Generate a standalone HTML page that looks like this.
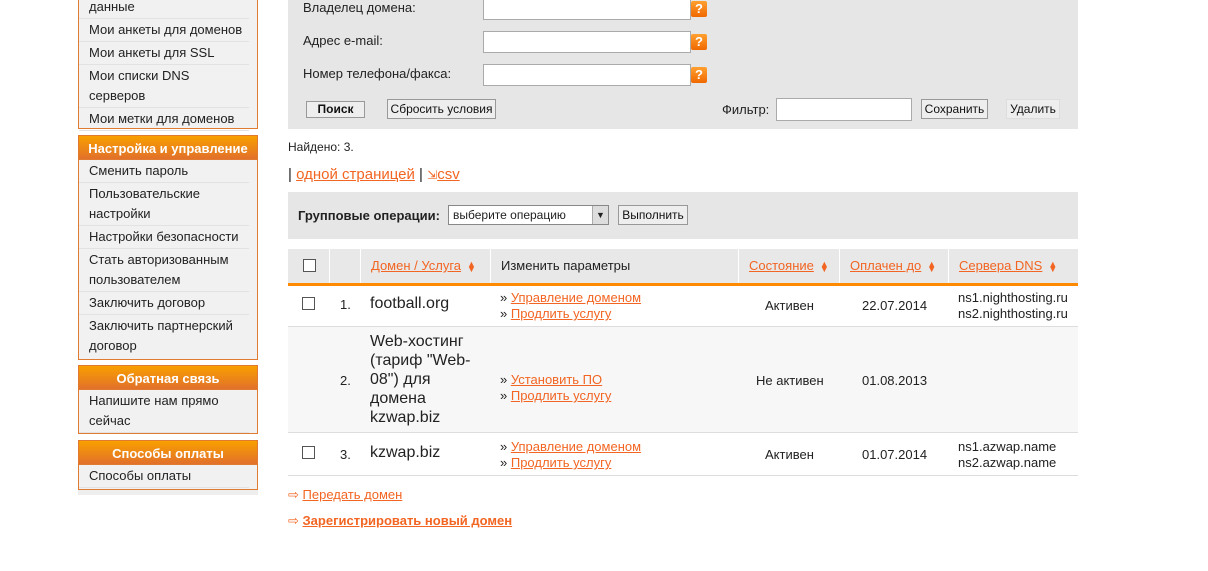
<!DOCTYPE html>
<html><head><meta charset="utf-8"><style>
*{box-sizing:border-box;margin:0;padding:0}
body{width:1208px;height:571px;background:#fff;font-family:"Liberation Sans",Arial,sans-serif;font-size:13px;color:#222;position:relative;overflow:hidden}
.a{position:absolute}
.box{position:absolute;left:78px;width:180px;border:1px solid #e07a30;border-top:none;background:#f1f1f1}
.box div.i{padding:0 0 0 10px;line-height:20px;border-bottom:1px solid #e2e2e2;margin-right:8px;padding-top:1px;padding-bottom:1px}
.hd{position:absolute;left:78px;width:180px;height:25px;background:linear-gradient(#f9a000,#e2702a);color:#fff;font-weight:bold;text-align:center;line-height:25px;font-size:13px;border:1px solid #e07a30}
.gray{position:absolute;background:#e6e6e6}
input.t{position:absolute;height:22px;border:1px solid #aaa;background:#fff}
.q{position:absolute;width:16px;height:16px;background:linear-gradient(#ffa030,#f06800);color:#fff;font-weight:bold;font-size:13px;text-align:center;line-height:16px;border-radius:2px}
.btn{position:absolute;height:20px;border:1px solid #999;background:#eee;font-size:12px;text-align:center;line-height:18px;color:#111}
a{color:#f26522;text-decoration:underline}
.cb{position:absolute;width:13px;height:13px;border:1px solid #555;background:#fff}
.sort{display:inline-block;margin-left:6px;color:#f26522;font-size:9px;line-height:5px;vertical-align:middle}
</style></head><body>
<div class="box" style="top:-4px;height:133px">
<div class="i">данные</div><div class="i">Мои анкеты для доменов</div><div class="i">Мои анкеты для SSL</div><div class="i">Мои списки DNS серверов</div><div class="i">Мои метки для доменов</div></div>
<div class="hd" style="top:135px">Настройка и управление</div>
<div class="box" style="top:160px;height:200px">
<div class="i">Сменить пароль</div><div class="i">Пользовательские настройки</div><div class="i">Настройки безопасности</div><div class="i">Стать авторизованным пользователем</div><div class="i">Заключить договор</div><div class="i" style="border:none">Заключить партнерский договор</div></div>
<div class="hd" style="top:365px">Обратная связь</div>
<div class="box" style="top:390px;height:44px"><div class="i">Напишите нам прямо сейчас</div></div>
<div class="hd" style="top:440px">Способы оплаты</div>
<div class="box" style="top:465px;height:25px"><div class="i">Способы оплаты</div></div>
<div class="a" style="left:78px;top:490px;width:180px;height:5px;background:#eee"></div>

<div class="gray" style="left:288px;top:0;width:790px;height:129px"></div>
<div class="a" style="left:303px;top:0">Владелец домена:</div>
<div class="a" style="left:303px;top:33px">Адрес e-mail:</div>
<div class="a" style="left:303px;top:66px">Номер телефона/факса:</div>
<input class="t" style="left:483px;top:-2px;width:208px">
<input class="t" style="left:483px;top:31px;width:208px">
<input class="t" style="left:483px;top:64px;width:208px">
<div class="q" style="left:691px;top:1px">?</div>
<div class="q" style="left:691px;top:34px">?</div>
<div class="q" style="left:691px;top:67px">?</div>
<div class="btn" style="left:306px;top:101px;width:59px;height:17px;line-height:15px;font-weight:bold">Поиск</div>
<div class="btn" style="left:387px;top:99px;width:109px">Сбросить условия</div>
<div class="a" style="left:722px;top:102px">Фильтр:</div>
<input class="t" style="left:776px;top:98px;width:136px;height:23px">
<div class="btn" style="left:921px;top:99px;width:67px">Сохранить</div>
<div class="btn" style="left:1006px;top:99px;width:54px;border-color:#ddd">Удалить</div>

<div class="a" style="left:288px;top:140px;font-size:12px">Найдено: 3.</div>
<div class="a" style="left:288px;top:166px;font-size:15px">| <a>одной страницей</a> | <span style="color:#f26522;font-size:12px">⇲</span><a>csv</a></div>

<div class="gray" style="left:288px;top:192px;width:790px;height:47px"></div>
<div class="a" style="left:298px;top:208px;font-weight:bold">Групповые операции:</div>
<div class="a" style="left:448px;top:205px;width:161px;height:20px;border:1px solid #888;background:#fff;font-size:12px;line-height:18px;padding-left:4px">выберите операцию<span style="position:absolute;right:0;top:0;width:16px;height:18px;background:#ddd;border-left:1px solid #aaa;text-align:center;font-size:9px">▼</span></div>
<div class="btn" style="left:618px;top:205px;width:70px">Выполнить</div>

<div class="a" style="left:288px;top:249px;width:790px;height:34px;background:#e8e8e8"></div>
<div class="a" style="left:288px;top:283px;width:790px;height:3px;background:#ff8a00"></div>
<div class="a" style="left:329px;top:249px;width:1px;height:34px;background:#fff"></div>
<div class="a" style="left:360px;top:249px;width:1px;height:34px;background:#fff"></div>
<div class="a" style="left:490px;top:249px;width:1px;height:34px;background:#fff"></div>
<div class="a" style="left:738px;top:249px;width:1px;height:34px;background:#fff"></div>
<div class="a" style="left:839px;top:249px;width:1px;height:34px;background:#fff"></div>
<div class="a" style="left:948px;top:249px;width:1px;height:34px;background:#fff"></div>
<div class="cb" style="left:303px;top:259px"></div>
<div class="a" style="left:371px;top:258px"><a>Домен / Услуга</a><span class="sort">▲<br>▼</span></div>
<div class="a" style="left:501px;top:258px">Изменить параметры</div>
<div class="a" style="left:749px;top:258px"><a>Состояние</a><span class="sort">▲<br>▼</span></div>
<div class="a" style="left:850px;top:258px"><a>Оплачен до</a><span class="sort">▲<br>▼</span></div>
<div class="a" style="left:959px;top:258px"><a>Сервера DNS</a><span class="sort">▲<br>▼</span></div>

<div class="a" style="left:288px;top:326px;width:790px;height:1px;background:#ddd"></div>
<div class="a" style="left:288px;top:327px;width:790px;height:105px;background:#f7f7f7"></div>
<div class="a" style="left:288px;top:432px;width:790px;height:1px;background:#ddd"></div>
<div class="a" style="left:288px;top:475px;width:790px;height:1px;background:#ddd"></div>

<div class="cb" style="left:302px;top:297px"></div>
<div class="a" style="left:340px;top:297px;font-size:13px">1.</div>
<div class="a" style="left:370px;top:295px;font-size:16px">football.org</div>
<div class="a" style="left:500px;top:290px;line-height:16px">» <a>Управление доменом</a><br>» <a>Продлить услугу</a></div>
<div class="a" style="left:765px;top:298px">Активен</div>
<div class="a" style="left:862px;top:298px">22.07.2014</div>
<div class="a" style="left:958px;top:290px;line-height:16px">ns1.nighthosting.ru<br>ns2.nighthosting.ru</div>

<div class="a" style="left:340px;top:373px">2.</div>
<div class="a" style="left:370px;top:332px;font-size:16px;line-height:19px;width:110px">Web-хостинг (тариф "Web-08") для домена kzwap.biz</div>
<div class="a" style="left:500px;top:372px;line-height:16px">» <a>Установить ПО</a><br>» <a>Продлить услугу</a></div>
<div class="a" style="left:756px;top:373px">Не активен</div>
<div class="a" style="left:862px;top:373px">01.08.2013</div>

<div class="cb" style="left:302px;top:446px"></div>
<div class="a" style="left:340px;top:447px">3.</div>
<div class="a" style="left:370px;top:444px;font-size:16px">kzwap.biz</div>
<div class="a" style="left:500px;top:439px;line-height:16px">» <a>Управление доменом</a><br>» <a>Продлить услугу</a></div>
<div class="a" style="left:765px;top:447px">Активен</div>
<div class="a" style="left:862px;top:447px">01.07.2014</div>
<div class="a" style="left:958px;top:439px;line-height:16px">ns1.azwap.name<br>ns2.azwap.name</div>

<div class="a" style="left:288px;top:487px;font-size:13px"><span style="color:#f26522">⇨</span> <a>Передать домен</a></div>
<div class="a" style="left:288px;top:513px;font-size:13px;font-weight:bold"><span style="color:#f26522;font-weight:normal">⇨</span> <a>Зарегистрировать новый домен</a></div>
</body></html>
